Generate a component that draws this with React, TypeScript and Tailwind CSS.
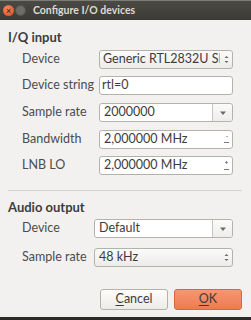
import React from "react";

const font = { fontFamily: 'Lato, "Open Sans", sans-serif' };

function Arrows() {
  return (
    <svg width="7" height="11" viewBox="0 0 7 11">
      <path d="M1.5 4 L3.5 2 L5.5 4 Z" fill="#6a6a6a" />
      <path d="M1.5 7 L3.5 9 L5.5 7 Z" fill="#6a6a6a" />
    </svg>
  );
}

function Down() {
  return (
    <svg width="8" height="6" viewBox="0 0 8 6">
      <path d="M1 1.5 L7 1.5 L4 5 Z" fill="#6a6a6a" />
    </svg>
  );
}

function Spin({ text, plus }: { text: string; plus?: boolean }) {
  return (
    <div className="flex h-[19px] w-[134px] items-center rounded-[3px] border border-[#b5b2ac] bg-white">
      <span className="flex-1 whitespace-nowrap pl-[4px] text-[12.5px] leading-none text-[#3c3c3c]">{text}</span>
      <div className="flex h-full w-[11px] flex-col items-center justify-center gap-[5px]">
        {plus ? (
          <div className="relative h-[3px] w-[3px]">
            <div className="absolute left-0 top-[1px] h-[1px] w-[3px] bg-[#8a8a8a]" />
            <div className="absolute left-[1px] top-0 h-[3px] w-[1px] bg-[#8a8a8a]" />
          </div>
        ) : (
          <div className="h-[1px] w-[2px] bg-[#aaaaaa]" />
        )}
        <div className="h-[1px] w-[5px] bg-[#7a7a7a]" />
      </div>
    </div>
  );
}

function Label({ children, w }: { children: React.ReactNode; w: string }) {
  return (
    <div className={`${w} shrink-0 whitespace-nowrap pl-[14px] text-[12.5px] leading-none text-[#4c4c4c]`}>
      {children}
    </div>
  );
}

export default function App() {
  return (
    <div className="flex h-[320px] w-[251px] flex-col overflow-hidden bg-[#f2f1f0]" style={font}>
      <div className="flex h-[20px] shrink-0 items-center border-t border-[#7d7a73] bg-gradient-to-b from-[#4a4944] to-[#3c3b37]">
        <div className="ml-[3px] flex h-[11px] w-[11px] items-center justify-center rounded-full bg-[radial-gradient(circle_at_40%_35%,#f28b62,#d84b1c)]">
          <span className="text-[9px] font-bold leading-none text-[#5a2a18]">×</span>
        </div>
        <div className="ml-[1px] h-[11px] w-[11px] rounded-full border border-[#55534e] bg-[#6e6c66]" />
        <span className="ml-[7px] whitespace-nowrap text-[10.5px] font-bold leading-none text-[#dfdbd2]">Configure I/O devices</span>
      </div>

      <div className="flex flex-1 flex-col px-[8px]">
        <div className="mt-[8px] h-[18px] text-[13px] font-bold leading-[18px] text-[#3c3c3c]">I/Q input</div>

        <div className="mt-[4px] flex items-center">
          <Label w="w-[91px]">Device</Label>
          <div className="flex h-[19px] w-[134px] items-center rounded-[3px] border border-[#b5b2ac] bg-gradient-to-b from-[#fbfbfa] to-[#ecebe9]">
            <span className="flex-1 overflow-hidden whitespace-nowrap pl-[3px] text-[12.5px] leading-none text-[#3c3c3c]">Generic RTL2832U SN</span>
            <div className="flex w-[12px] shrink-0 justify-center"><Arrows /></div>
          </div>
        </div>

        <div className="mt-[7px] flex items-center">
          <Label w="w-[91px]">Device string</Label>
          <div className="flex h-[19px] w-[134px] items-center rounded-[3px] border border-[#b5b2ac] bg-white">
            <span className="pl-[2px] text-[12.5px] leading-none text-[#3c3c3c]">rtl=0</span>
          </div>
        </div>

        <div className="mt-[8px] flex items-center">
          <Label w="w-[91px]">Sample rate</Label>
          <div className="flex h-[19px] w-[134px] items-center rounded-[3px] border border-[#b5b2ac] bg-white">
            <span className="flex-1 pl-[4px] text-[12.5px] leading-none text-[#3c3c3c]">2000000</span>
            <div className="flex h-full w-[20px] items-center justify-center rounded-r-[3px] border-l border-[#c8c5bf] bg-gradient-to-b from-[#fbfbfa] to-[#eeedeb]"><Down /></div>
          </div>
        </div>

        <div className="mt-[8px] flex items-center">
          <Label w="w-[91px]">Bandwidth</Label>
          <Spin text="2,000000 MHz" />
        </div>

        <div className="mt-[7px] flex items-center">
          <Label w="w-[91px]">LNB LO</Label>
          <Spin text="2,000000 MHz" plus />
        </div>

        <div className="mt-[15px] mr-[1px] h-[1px] bg-[#d6d3ce]" />

        <div className="mt-[7px] h-[18px] text-[13px] font-bold leading-[18px] text-[#3c3c3c]">Audio output</div>

        <div className="mt-[3px] flex items-center">
          <Label w="w-[86px]">Device</Label>
          <div className="flex h-[19px] w-[139px] items-center rounded-[3px] border border-[#b5b2ac] bg-white">
            <span className="flex-1 pl-[4px] text-[12.5px] leading-none text-[#3c3c3c]">Default</span>
            <div className="flex h-full w-[20px] items-center justify-center rounded-r-[3px] border-l border-[#c8c5bf] bg-gradient-to-b from-[#fbfbfa] to-[#eeedeb]"><Down /></div>
          </div>
        </div>

        <div className="mt-[10px] flex items-center">
          <Label w="w-[86px]">Sample rate</Label>
          <div className="flex h-[19px] w-[139px] items-center rounded-[3px] border border-[#b5b2ac] bg-gradient-to-b from-[#fbfbfa] to-[#ecebe9]">
            <span className="flex-1 pl-[4px] text-[12.5px] leading-none text-[#3c3c3c]">48 kHz</span>
            <div className="flex w-[12px] shrink-0 justify-center"><Arrows /></div>
          </div>
        </div>

        <div className="mt-[22px] flex justify-end gap-[6px] pr-[1px]">
          <div className="flex h-[21px] w-[68px] items-center justify-center rounded-[3px] border border-[#b5b2ac] bg-gradient-to-b from-[#fdfdfc] to-[#ecebe9] text-[12.5px] leading-none text-[#3c3c3c]">
            <span><span className="underline underline-offset-2">C</span>ancel</span>
          </div>
          <div className="flex h-[21px] w-[68px] items-center justify-center rounded-[3px] border border-[#d9663f] bg-gradient-to-b from-[#f79574] to-[#ef7a52] text-[12.5px] leading-none text-[#3c3c3c]">
            <span><span className="underline underline-offset-2">O</span>K</span>
          </div>
        </div>
        <div className="flex-1" />
      </div>
      <div className="h-[3px] shrink-0 bg-[#2b2a27]" />
    </div>
  );
}
